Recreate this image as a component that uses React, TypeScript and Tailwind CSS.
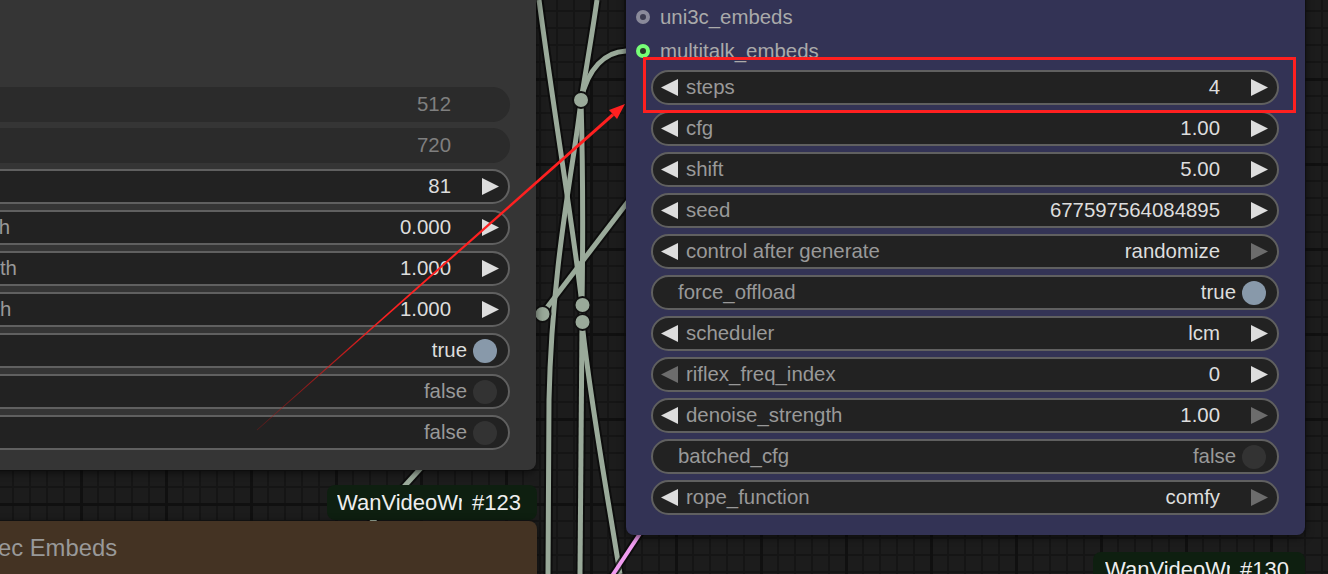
import React from "react";

type Widget =
  | { kind: "number"; label: string; value: string; dimLeft?: boolean; dimRight?: boolean }
  | { kind: "toggle"; label: string; on: boolean }
  | { kind: "disabled"; label: string; value: string };

const leftWidgets: Widget[] = [
  { kind: "disabled", label: "width", value: "512" },
  { kind: "disabled", label: "height", value: "720" },
  { kind: "number", label: "num_frames", value: "81" },
  { kind: "number", label: "noise_aug_strength", value: "0.000" },
  { kind: "number", label: "start_latent_strength", value: "1.000" },
  { kind: "number", label: "end_latent_strength", value: "1.000" },
  { kind: "toggle", label: "force_offload", on: true },
  { kind: "toggle", label: "fun_or_fl2v_model", on: false },
  { kind: "toggle", label: "tiled_vae", on: false },
];

const samplerWidgets: Widget[] = [
  { kind: "number", label: "steps", value: "4" },
  { kind: "number", label: "cfg", value: "1.00" },
  { kind: "number", label: "shift", value: "5.00" },
  { kind: "number", label: "seed", value: "677597564084895" },
  { kind: "number", label: "control after generate", value: "randomize", dimRight: true },
  { kind: "toggle", label: "force_offload", on: true },
  { kind: "number", label: "scheduler", value: "lcm" },
  { kind: "number", label: "riflex_freq_index", value: "0", dimLeft: true },
  { kind: "number", label: "denoise_strength", value: "1.00", dimRight: true },
  { kind: "toggle", label: "batched_cfg", on: false },
  { kind: "number", label: "rope_function", value: "comfy", dimRight: true },
];

function Arrow({ dir, dim }: { dir: "left" | "right"; dim?: boolean }) {
  return (
    <svg width="17" height="17" viewBox="0 0 17 17" className="shrink-0">
      <polygon
        points={dir === "left" ? "0,8.5 17,0 17,17" : "17,8.5 0,0 0,17"}
        fill={dim ? "#6c6c6c" : "#dddddd"}
      />
    </svg>
  );
}

function WidgetRow({ w }: { w: Widget }) {
  if (w.kind === "disabled") {
    return (
      <div className="flex h-[35px] items-center rounded-full bg-[#2b2b2b] pl-[37px] pr-[59px]">
        <span className="whitespace-nowrap text-[#6a6a6a]">{w.label}</span>
        <span className="flex-1" />
        <span className="text-[#7f7f7f]">{w.value}</span>
      </div>
    );
  }
  if (w.kind === "toggle") {
    return (
      <div className="flex h-[35px] items-center rounded-full border-2 border-[#606060] bg-[#222222] pl-[25px] pr-[11px]">
        <span className="whitespace-nowrap text-[#999999]">{w.label}</span>
        <span className="flex-1" />
        <span className={w.on ? "text-[#dddddd]" : "text-[#999999]"}>{w.on ? "true" : "false"}</span>
        <span
          className={
            "ml-[6px] h-[24px] w-[24px] shrink-0 rounded-full " + (w.on ? "bg-[#8899aa]" : "bg-[#333333]")
          }
        />
      </div>
    );
  }
  return (
    <div className="flex h-[35px] items-center rounded-full border-2 border-[#606060] bg-[#222222] pl-[8px] pr-[9px]">
      <Arrow dir="left" dim={w.dimLeft} />
      <span className="ml-[8px] whitespace-nowrap text-[#999999]">{w.label}</span>
      <span className="flex-1" />
      <span className="whitespace-nowrap text-[#dddddd]">{w.value}</span>
      <span className="ml-[31px] flex">
        <Arrow dir="right" dim={w.dimRight} />
      </span>
    </div>
  );
}

function Slot({ label, connected }: { label: string; connected?: boolean }) {
  return (
    <div className="flex h-[34px] items-center pl-[10px]">
      <span
        className={
          "h-[14px] w-[14px] shrink-0 rounded-full border-[4px] " +
          (connected ? "border-[#77ff77] bg-[#2a3a2a]" : "border-[#8a8a9a] bg-[#3c3c50]")
        }
      />
      <span className="ml-[10px] whitespace-nowrap text-[#aaaaaa]">{label}</span>
    </div>
  );
}

function Badge({ id, className }: { id: string; className: string }) {
  return (
    <div
      className={
        "absolute flex h-[35px] items-center rounded-[8px] bg-[#0e1f10] font-['Liberation_Sans',Arial,sans-serif] text-[22px] text-[#eeeeee] " +
        className
      }
    >
      <span className="w-[125px] overflow-hidden whitespace-nowrap">WanVideoWrapper</span>
      <span className="ml-[10px]">{id}</span>
    </div>
  );
}

function Links() {
  const paths = [
    "M539,0 C555,120 575,240 582,305 L582,322 C590,400 605,480 620,574",
    "M597,0 C592,35 586,70 581,100 C575,160 552,260 549,400 L548,574",
    "M581,100 C583,170 583,240 582,305",
    "M582,322 C582,420 581,500 580,574",
    "M581,100 C588,68 605,52 626,51 L643,50",
    "M542,314 L640,186",
    "M352,544 L430,458",
  ];
  return (
    <svg className="absolute inset-0" width="1328" height="574">
      {paths.map((d, i) => (
        <path key={"b" + i} d={d} fill="none" stroke="#0a0a0a" strokeWidth="9" strokeOpacity="0.8" />
      ))}
      {paths.map((d, i) => (
        <path key={"l" + i} d={d} fill="none" stroke="#9aaa9a" strokeWidth="5" />
      ))}
      <path d="M612,576 L645,526" fill="none" stroke="#0a0a0a" strokeWidth="8" strokeOpacity="0.8" />
      <path d="M612,576 L645,526" fill="none" stroke="#f09cf0" strokeWidth="4" />
      {[
        [581, 100],
        [582.5, 305],
        [582.5, 322],
        [542.5, 314],
      ].map(([cx, cy], i) => (
        <circle key={i} cx={cx} cy={cy} r="8" fill="#9aaa9a" stroke="#111111" strokeWidth="2" />
      ))}
    </svg>
  );
}

function Annotation() {
  return (
    <svg className="pointer-events-none absolute inset-0" width="1328" height="574">
      <defs>
        <linearGradient id="arrowFade" x1="257" y1="430" x2="625" y2="104" gradientUnits="userSpaceOnUse">
          <stop offset="0" stopColor="#b01010" stopOpacity="0.4" />
          <stop offset="0.35" stopColor="#ff2020" />
          <stop offset="1" stopColor="#ff2020" />
        </linearGradient>
      </defs>
      <polygon points="256.8,429.8 611.9,113.4 614.1,115.8 257.2,430.2" fill="url(#arrowFade)" />
      <polygon points="625,104 609,110.1 617,119.1" fill="#ff2020" />
      <rect x="644.5" y="58.5" width="650" height="53" fill="none" stroke="#ff2020" strokeWidth="3" />
    </svg>
  );
}

export default function App() {
  return (
    <div className="relative h-[574px] w-[1328px] overflow-hidden bg-[#1c1c1c] bg-[linear-gradient(to_right,#101010_3px,transparent_3px),linear-gradient(to_bottom,#101010_3px,transparent_3px),linear-gradient(to_right,#151515_2px,transparent_2px),linear-gradient(to_bottom,#151515_2px,transparent_2px)] bg-size-[85px_85px,85px_85px,17px_17px,17px_17px] bg-position-[-5px_-7px] font-['Liberation_Sans',Arial,sans-serif] text-[20.4px] leading-none">
      <Links />

      {/* image to video encode node, mostly off to the left */}
      <div className="absolute left-[-230px] top-[-100px] flex h-[570px] w-[766px] flex-col gap-[6px] rounded-[8px] bg-[#353535] px-[26px] pt-[187px] shadow-[0_2px_8px_rgba(0,0,0,0.6)]">
        {leftWidgets.map((w) => (
          <WidgetRow key={w.label} w={w} />
        ))}
      </div>

      <Badge id="#123" className="left-[327px] top-[485px] w-[210px] pl-[10px]" />

      {/* embeds node title, cut at the bottom */}
      <div className="absolute left-[-10px] top-[521px] h-[80px] w-[547px] rounded-tr-[8px] bg-[#443323] pl-[8px] pt-[13px] text-[23.8px] leading-[28px] text-[#999999] shadow-[0_2px_8px_rgba(0,0,0,0.6)]">
        ec Embeds
      </div>

      {/* sampler node */}
      <div className="absolute left-[626px] top-[-22px] flex w-[679px] flex-col rounded-[8px] bg-[#333355] pb-[20px] pt-[22px] shadow-[0_2px_8px_rgba(0,0,0,0.6)]">
        <Slot label="uni3c_embeds" />
        <Slot label="multitalk_embeds" connected />
        <div className="mt-[2px] flex flex-col gap-[6px] pl-[25px] pr-[26px]">
          {samplerWidgets.map((w) => (
            <WidgetRow key={w.label} w={w} />
          ))}
        </div>
      </div>

      <Badge id="#130" className="left-[1093px] top-[552px] w-[212px] pl-[12px]" />

      <Annotation />
    </div>
  );
}
